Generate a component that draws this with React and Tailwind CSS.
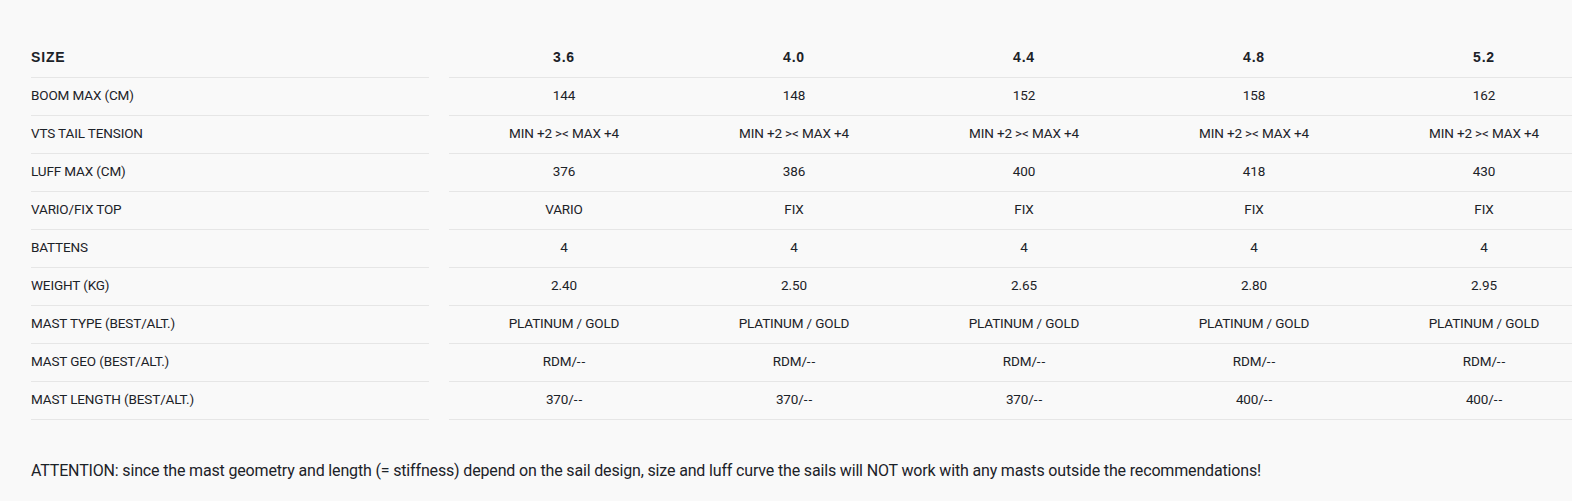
const sizes = ["3.6", "4.0", "4.4", "4.8", "5.2"];

const rows = [
  ["BOOM MAX (CM)", ["144", "148", "152", "158", "162"]],
  ["VTS TAIL TENSION", Array(5).fill("MIN +2 >< MAX +4")],
  ["LUFF MAX (CM)", ["376", "386", "400", "418", "430"]],
  ["VARIO/FIX TOP", ["VARIO", "FIX", "FIX", "FIX", "FIX"]],
  ["BATTENS", ["4", "4", "4", "4", "4"]],
  ["WEIGHT (KG)", ["2.40", "2.50", "2.65", "2.80", "2.95"]],
  ["MAST TYPE (BEST/ALT.)", Array(5).fill("PLATINUM / GOLD")],
  ["MAST GEO (BEST/ALT.)", Array(5).fill("RDM/--")],
  ["MAST LENGTH (BEST/ALT.)", ["370/--", "370/--", "370/--", "400/--", "400/--"]],
];

export default function App() {
  return (
    <div className="min-h-screen w-[1572px] overflow-hidden bg-[#f9f9f9] text-[#1c2228] font-['Roboto',sans-serif]">
      <div className="pt-[40px] pl-[31px]">
        <div className="flex h-[38px] items-center">
          <div className="w-[398px] mr-[20px] shrink-0 h-full flex items-center pb-[2px] border-b border-[#e6e6e6] font-['Liberation_Sans',sans-serif] font-bold text-[14px] tracking-[0.06em]">
            SIZE
          </div>
          {sizes.map((s) => (
            <div key={s} className="w-[230px] shrink-0 h-full flex items-center justify-center pb-[2px] border-b border-[#e6e6e6] font-['Liberation_Sans',sans-serif] font-bold text-[14px] tracking-[0.06em]">
              {s}
            </div>
          ))}
        </div>
        {rows.map(([label, vals]) => (
          <div key={label} className="flex h-[38px] items-center text-[13.5px] tracking-[-0.01em]">
            <div className="w-[398px] mr-[20px] shrink-0 h-full flex items-center pb-[2px] border-b border-[#e6e6e6]">
              {label}
            </div>
            {vals.map((v, i) => (
              <div key={i} className="w-[230px] shrink-0 h-full flex items-center justify-center pb-[2px] border-b border-[#e6e6e6]">
                {v.endsWith("--") ? (
                  <span>
                    {v.slice(0, -2)}
                    <span className="tracking-[1px]">-</span>-
                  </span>
                ) : (
                  v
                )}
              </div>
            ))}
          </div>
        ))}
        <p className="mt-[39px] text-[16px] tracking-[-0.01em]">
          ATTENTION: since the mast geometry and length (= stiffness) depend on the sail design, size and luff curve the sails will NOT work with any masts outside the recommendations!
        </p>
      </div>
    </div>
  );
}
